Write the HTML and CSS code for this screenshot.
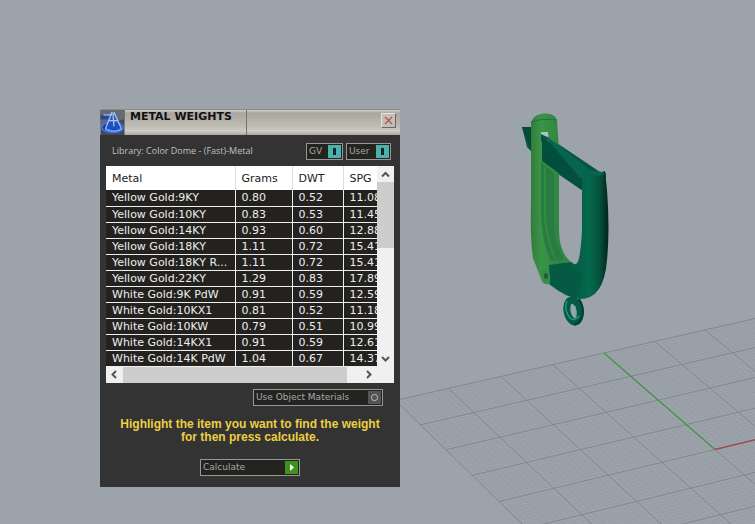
FILE: index.html
```html
<!DOCTYPE html>
<html lang="en">
<head>
<meta charset="utf-8">
<title>Metal Weights</title>
<link rel="stylesheet" href="styles.css">
</head>
<body>
<main class="viewport">
  <svg class="scene" viewBox="0 0 755 524" preserveAspectRatio="xMinYMin slice" aria-hidden="true">
    <defs>
      <linearGradient id="tube" gradientUnits="userSpaceOnUse" x1="581" x2="609" y1="0" y2="0">
        <stop offset="0" stop-color="#046147"/><stop offset=".3" stop-color="#056a4b"/><stop offset=".65" stop-color="#05533d"/><stop offset="1" stop-color="#03211b"/>
      </linearGradient>
      <linearGradient id="light" x1="0" x2="1" y1="0" y2="0">
        <stop offset="0" stop-color="#317c3c"/><stop offset=".25" stop-color="#3b9347"/><stop offset=".7" stop-color="#2f8643"/><stop offset="1" stop-color="#348b43"/>
      </linearGradient>
      <linearGradient id="bar" x1="0" x2="1" y1="0" y2="0">
        <stop offset="0" stop-color="#025b46"/><stop offset="1" stop-color="#04533f"/>
      </linearGradient>
    </defs>
    <g id="grid"></g>
    <path d="M604 353 715 449.500" stroke="#46964b" stroke-width="1.500"/>
    <path d="M715 449.500 760 438.500" stroke="#a34b50" stroke-width="1.500"/>
    <path d="M522 127 533 127 600 172 606 173 606 181 583 191 539 161 532 152 527 147Z" fill="url(#bar)"/>
    <path d="M522 127 536 127 531 151Z" fill="#03483b"/>
    <path d="M582 177Q588 171 596 174L605 171 607 190Q610 230 607 260Q604 299 580 299Q566 298 549 284L547 263 571 262Q577 268 579 258Q581 250 582 230Z" fill="url(#tube)"/>
    <path d="M548 262 572 262 583 277 576 298Q562 292 549 284Z" fill="#04543d" opacity=".5"/>
    <path fill-rule="evenodd" d="M531 122Q534 114 544 113.500Q555 113 557 120L559 151V230Q559 252 571 262L549 265 550 283Q544 287 541 279L533 258Q530 238 531 205ZM541 133V141L545 145 549 135 545 132Z" fill="url(#light)"/>
    <path d="M541 162 554 173V222Q555 248 564 259L551 261Q541 240 541 210Z" fill="#287c40"/>
    <path d="M545 167V217Q547 241 555 258" fill="none" stroke="#318a46" stroke-width="2"/>
    <path d="M531 122Q542 118 557 120" fill="none" stroke="#277139" stroke-width="1"/>
    <path d="M542 136 582 169 582 190 542 161Z" fill="#034f3d"/>
    <path d="M543 134 560 146 590 170 602 172 605 174 588 178 580 178Z" fill="#066450"/>
    <path d="M541 132H548V137L545 136 541 134Z" fill="#b3bfc0"/>
    <ellipse cx="546" cy="276" rx="4" ry="7" fill="#368d48" transform="rotate(-15 546 276)"/>
    <ellipse cx="546" cy="276" rx="2" ry="3" fill="#225b31"/>
    <ellipse cx="573.500" cy="311" rx="6.500" ry="11" fill="none" stroke="#035b47" stroke-width="7" transform="rotate(-12 573.500 311)"/>
    <path d="M567 301Q563 309 570 318Q574 322 579 316" fill="none" stroke="#239777" stroke-width="1.500"/>
    <path d="M579 299Q585 308 582 317Q580 323 574 325" fill="none" stroke="#033d30" stroke-width="2"/>
    <path d="M575 306Q577 311 575 316" fill="none" stroke="#5ab99c" stroke-width="1"/>
  </svg>

  <section class="dialog" aria-labelledby="title">
    <header class="titlebar">
      <svg class="logo" viewBox="0 0 25 26" aria-hidden="true">
        <path d="M0 0H25V26H0Z" fill="#444a55"/>
        <path d="M0 0H25V9L0 19Z" fill="#656a72"/>
        <path d="M0 6Q7 2 13 6L8 10H0Z" fill="#26479a"/>
        <ellipse cx="12.500" cy="18" rx="11" ry="5.500" fill="#123ba2" stroke="#3c78e8" stroke-width="1.500"/>
        <path d="M13 3 22 20 5 20Z" fill="#2454c4" opacity=".8"/>
        <path d="M12 2 5 20M14 2 22 20M13 3 14 17M3 5 12 5M9 11 18 11" fill="none" stroke="#a8c6f4" stroke-width="1.300"/>
        <path d="M5 20Q13 24 22 20" fill="none" stroke="#68a1ff" stroke-width="2"/>
      </svg>
      <h1 class="title" id="title">METAL WEIGHTS</h1>
      <button class="close" type="button" aria-label="Close"><svg viewBox="0 0 9 9" width="9" height="9"><path d="M1 1 8 8M8 1 1 8" stroke="#b0504c" stroke-width="1.200"/></svg></button>
    </header>
    <div class="content">
      <div class="toolbar">
        <span class="library">Library: Color Dome - (Fast)-Metal</span>
        <button class="field gv" type="button">GV<span class="toggle"></span></button>
        <button class="field user" type="button">User<span class="toggle"></span></button>
      </div>
      <div class="list">
        <div class="clip">
          <table class="metals">
            <colgroup><col class="col-metal"><col class="col-grams"><col class="col-dwt"><col class="col-spg"></colgroup>
            <thead><tr><th>Metal</th><th>Grams</th><th>DWT</th><th>SPG</th></tr></thead>
            <tbody>
              <tr><td>Yellow Gold:9KY</td><td>0.80</td><td>0.52</td><td>11.08</td></tr>
              <tr><td>Yellow Gold:10KY</td><td>0.83</td><td>0.53</td><td>11.45</td></tr>
              <tr><td>Yellow Gold:14KY</td><td>0.93</td><td>0.60</td><td>12.88</td></tr>
              <tr><td>Yellow Gold:18KY</td><td>1.11</td><td>0.72</td><td>15.41</td></tr>
              <tr><td>Yellow Gold:18KY R...</td><td>1.11</td><td>0.72</td><td>15.41</td></tr>
              <tr><td>Yellow Gold:22KY</td><td>1.29</td><td>0.83</td><td>17.89</td></tr>
              <tr><td>White Gold:9K PdW</td><td>0.91</td><td>0.59</td><td>12.59</td></tr>
              <tr><td>White Gold:10KX1</td><td>0.81</td><td>0.52</td><td>11.18</td></tr>
              <tr><td>White Gold:10KW</td><td>0.79</td><td>0.51</td><td>10.99</td></tr>
              <tr><td>White Gold:14KX1</td><td>0.91</td><td>0.59</td><td>12.61</td></tr>
              <tr><td>White Gold:14K PdW</td><td>1.04</td><td>0.67</td><td>14.37</td></tr>
            </tbody>
          </table>
        </div>
        <div class="vscroll">
          <button class="arrow" type="button" aria-label="Scroll up"><svg viewBox="0 0 9 9" width="9" height="9"><path d="M1 6.500 4.500 3 8 6.500"/></svg></button>
          <div class="vthumb"></div>
          <button class="arrow" type="button" aria-label="Scroll down"><svg viewBox="0 0 9 9" width="9" height="9"><path d="M1 3 4.500 6.500 8 3"/></svg></button>
        </div>
        <div class="hscroll">
          <button class="arrow" type="button" aria-label="Scroll left"><svg viewBox="0 0 9 9" width="9" height="9"><path d="M6 1 2.500 4.500 6 8"/></svg></button>
          <div class="hthumb"></div>
          <button class="arrow" type="button" aria-label="Scroll right"><svg viewBox="0 0 9 9" width="9" height="9"><path d="M3 1 6.500 4.500 3 8"/></svg></button>
        </div>
      </div>
      <button class="field materials" type="button">Use Object Materials<span class="radio"></span></button>
      <p class="hint">Highlight the item you want to find the weight<br>for then press calculate.</p>
      <button class="field calculate" type="button">Calculate<span class="play"><svg viewBox="0 0 13 13" width="13" height="13"><path d="M5 3 9 6.500 5 10Z" fill="#fff"/></svg></span></button>
    </div>
  </section>
</main>
<script src="grid.js"></script>
</body>
</html>
```
FILE: styles.css
```css
* { box-sizing: border-box; }

body { margin: 0; background: #9ca3ab; }

.viewport { position: relative; min-height: 100vh; overflow: hidden; }

.scene { display: block; width: 100%; min-height: 100vh; }

.minor { stroke: #90969e; stroke-width: 1; opacity: 0.35; }

.major { stroke: #80878f; stroke-width: 1; }

.dialog {
  position: absolute;
  left: 100px;
  top: 109px;
  width: 300px;
  background: #333;
  font-family: "DejaVu Sans", sans-serif;
  font-size: 11px;
}

button { margin: 0; padding: 0; border: 0; font: inherit; }

.titlebar {
  display: flex;
  height: 26px;
  padding-right: 3px;
  border-top: 1px solid #8c8b84;
  background: linear-gradient(#d2d0c8 0, #a9a69f 3px, #bebbb3 16px, #cfccc4 21px, #aaa79e);
}

.logo { width: 25px; height: 25px; }

.title {
  width: 122px;
  margin: 0;
  padding-left: 5px;
  border-right: 1px solid #75736d;
  color: #111;
  font: bold 11px/13px "DejaVu Sans", sans-serif;
  white-space: nowrap;
}

.close {
  display: grid;
  place-items: center;
  width: 15px;
  height: 15px;
  margin: 3px 1px 0 auto;
  border: 1px solid #666;
  border-top-color: #e6e3dc;
  border-left-color: #e6e3dc;
  background: #c2bfb7;
}

.content {
  display: flex;
  flex-direction: column;
  padding: 8px 6px 11px;
}

.toolbar {
  display: flex;
  gap: 3px;
  margin-bottom: 6px;
  padding: 0 3px 0 6px;
}

.library {
  flex: 1;
  color: #c0c0c0;
  font: 9px/16px "Open Sans", sans-serif;
  white-space: nowrap;
}

.field {
  display: flex;
  justify-content: space-between;
  align-items: center;
  height: 17px;
  padding: 0 1px 0 2px;
  border: 1px solid #969696;
  background: #23231f;
  color: #a8a8a8;
  font-size: 9px;
  line-height: 15px;
  white-space: nowrap;
}

.gv { width: 37px; }

.user { width: 45px; }

.toggle {
  width: 13px;
  height: 13px;
  background: linear-gradient(#14242b, #14242b) center / 3px 7px no-repeat #4cb0ac;
}

.list {
  display: grid;
  grid-template-columns: 1fr 17px;
  background: #fff;
}

.clip { overflow: hidden; }

.metals {
  width: 288px;
  table-layout: fixed;
  border-collapse: collapse;
}

.col-metal { width: 129px; }
.col-grams { width: 57px; }
.col-dwt { width: 51px; }
.col-spg { width: 51px; }

th {
  height: 24px;
  padding: 0 0 0 6px;
  border-right: 1px solid #ddd;
  background: #fff;
  color: #222;
  font-weight: normal;
  text-align: left;
}

td {
  height: 16px;
  padding: 0 0 0 6px;
  border-right: 1px solid #eee;
  border-bottom: 1px solid #eee;
  background: #23221f;
  color: #eee;
  line-height: 15px;
  white-space: nowrap;
}

.arrow { display: grid; place-items: center; width: 17px; height: 16px; background: transparent; }

.arrow path { fill: none; stroke: #555; stroke-width: 2; }

.vscroll { display: flex; flex-direction: column; background: #f0f0f0; }

.vthumb { flex: 0 1 66px; background: #cdcdcd; }

.vscroll .arrow:last-child { margin-top: auto; }

.hscroll { grid-column: 1 / -1; display: flex; padding-right: 17px; background: #f0f0f0; }

.hthumb { flex: 0 1 224px; background: #cdcdcd; }

.hscroll .arrow:last-child { margin-left: auto; }

.materials { width: 130px; margin: 6px 11px 0 auto; }

.radio {
  width: 13px;
  height: 13px;
  background: radial-gradient(circle, #555 2px, #aaa 3px, #aaa 3px, #555 4px);
}

.hint {
  margin: 12px 0 15px;
  color: #edcf42;
  font: bold 12px/13px "Liberation Sans", sans-serif;
  text-align: center;
  white-space: nowrap;
}

.calculate { width: 100px; align-self: center; }

.play { width: 13px; height: 13px; background: #3f921d; }

.play svg { display: block; }
```
FILE: grid.js
```js
// Ground plane: projects grid coordinates through four known points of the
// plane, (0,0), (4,0), (4,4) and (0,4), and draws the ruled lines.
const [p0, p1, p2, p3] = [[395.5, 400.5], [604, 353], [715, 449.5], [499, 501.5]];
const dx1 = p1[0] - p2[0], dx2 = p3[0] - p2[0], sx = p0[0] - p1[0] + p2[0] - p3[0];
const dy1 = p1[1] - p2[1], dy2 = p3[1] - p2[1], sy = p0[1] - p1[1] + p2[1] - p3[1];
const det = dx1 * dy2 - dx2 * dy1;
const g = (sx * dy2 - dx2 * sy) / det;
const h = (dx1 * sy - sx * dy1) / det;

function project(i, j) {
  const u = i / 4, v = j / 4, w = g * u + h * v + 1;
  return [0, 1].map(k =>
    ((p1[k] - p0[k] + g * p1[k]) * u + (p3[k] - p0[k] + h * p3[k]) * v + p0[k]) / w);
}

function rule(a, b, kind) {
  const line = document.createElementNS("http://www.w3.org/2000/svg", "line");
  line.setAttribute("x1", a[0]);
  line.setAttribute("y1", a[1]);
  line.setAttribute("x2", b[0]);
  line.setAttribute("y2", b[1]);
  line.setAttribute("class", kind);
  document.getElementById("grid").append(line);
}

const steps = 10;
for (const kind of ["minor", "major"]) {
  for (let n = 0; n <= 8 * steps; n++) {
    if ((n % steps === 0) !== (kind === "major")) continue;
    rule(project(0, n / steps), project(8, n / steps), kind);
    rule(project(n / steps, 0), project(n / steps, 8), kind);
  }
}
```
